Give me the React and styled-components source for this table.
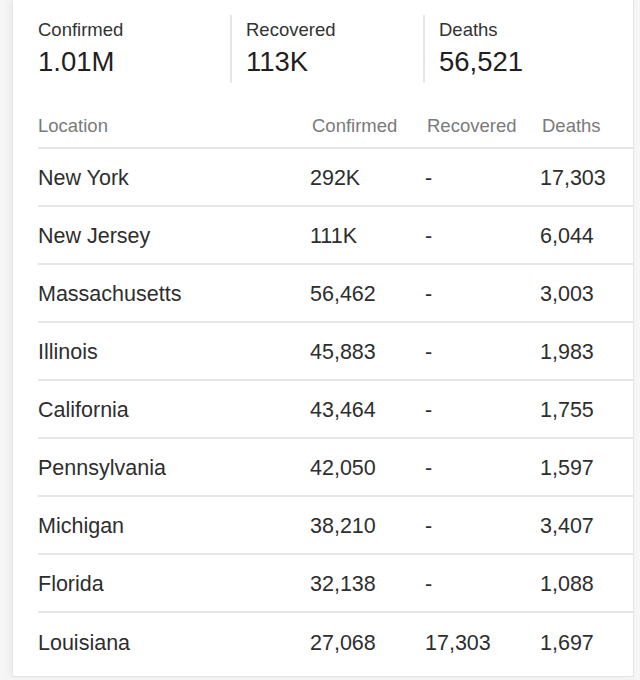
import React from "react";
import styled, { createGlobalStyle } from "styled-components";

const GlobalStyle = createGlobalStyle`
  body {
    margin: 0;
    background: #ffffff;
    font-family: "Liberation Sans", Arial, Helvetica, sans-serif;
  }
`;

const Page = styled.div`
  width: 640px;
  height: 680px;
  overflow: hidden;
  background: #f6f6f6;
`;

const Card = styled.div`
  margin-left: 12px;
  width: 622px;
  height: 677px;
  background: #ffffff;
  border-right: 1px solid #e4e4e4;
  border-bottom: 1px solid #e2e2e2;
  border-left: 1px solid #e8e8e8;
  box-shadow: -3px 0 8px rgba(0, 0, 0, 0.05);
  box-sizing: border-box;
  padding-left: 25px;
`;

const Stats = styled.div`
  display: flex;
  padding-top: 15px;
`;

const Stat = styled.div`
  height: 68px;
  box-sizing: border-box;
  width: ${(p) => p.width}px;
  padding: 4px 0 0 ${(p) => (p.first ? 0 : 14)}px;
  border-left: ${(p) => (p.first ? "none" : "2px solid #e6e6e6")};
`;

const StatLabel = styled.div`
  font-size: 18.5px;
  line-height: 22px;
  color: #333333;
`;

const StatValue = styled.div`
  margin-top: 5px;
  font-size: 27.5px;
  line-height: 32px;
  color: #1f1f1f;
`;

const Table = styled.div`
  margin-top: 20px;
`;

const Row = styled.div`
  display: grid;
  grid-template-columns: 272px 115px 115px 1fr;
  align-items: center;
  height: ${(p) => (p.header ? 46 : 58)}px;
  border-bottom: ${(p) => (p.last ? "none" : "2px solid #e6e6e6")};
  box-sizing: border-box;
`;

const HeadCell = styled.div`
  font-size: 18.5px;
  color: #7a7a7a;
  padding-left: ${(p) => (p.num ? 2 : 0)}px;
  padding-top: 2px;
`;

const Cell = styled.div`
  font-size: 21.5px;
  color: #2e2e2e;
  padding-top: 3px;
`;

const stats = [
  { label: "Confirmed", value: "1.01M", width: 192 },
  { label: "Recovered", value: "113K", width: 193 },
  { label: "Deaths", value: "56,521", width: 200 },
];

const rows = [
  ["New York", "292K", "-", "17,303"],
  ["New Jersey", "111K", "-", "6,044"],
  ["Massachusetts", "56,462", "-", "3,003"],
  ["Illinois", "45,883", "-", "1,983"],
  ["California", "43,464", "-", "1,755"],
  ["Pennsylvania", "42,050", "-", "1,597"],
  ["Michigan", "38,210", "-", "3,407"],
  ["Florida", "32,138", "-", "1,088"],
  ["Louisiana", "27,068", "17,303", "1,697"],
];

export default function App() {
  return (
    <Page>
      <GlobalStyle />
      <Card>
        <Stats>
          {stats.map((s, i) => (
            <Stat key={s.label} width={s.width} first={i === 0}>
              <StatLabel>{s.label}</StatLabel>
              <StatValue>{s.value}</StatValue>
            </Stat>
          ))}
        </Stats>
        <Table>
          <Row header>
            <HeadCell>Location</HeadCell>
            <HeadCell num>Confirmed</HeadCell>
            <HeadCell num>Recovered</HeadCell>
            <HeadCell num>Deaths</HeadCell>
          </Row>
          {rows.map((r, i) => (
            <Row key={r[0]} last={i === rows.length - 1}>
              {r.map((c, j) => (
                <Cell key={j}>{c}</Cell>
              ))}
            </Row>
          ))}
        </Table>
      </Card>
    </Page>
  );
}
